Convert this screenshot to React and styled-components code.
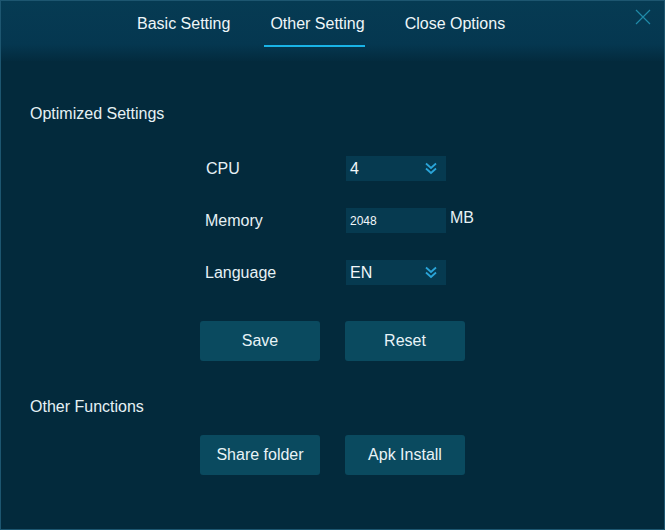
import React from "react";
import styled, { createGlobalStyle } from "styled-components";

const Global = createGlobalStyle`
  html, body { margin: 0; padding: 0; background: #032a3c; }
  body { font-family: "Liberation Sans", Arial, sans-serif; }
  * { box-sizing: border-box; }
`;

const Window = styled.div`
  width: 665px;
  height: 530px;
  background: #032a3c;
  border: 1px solid #1d5670;
  display: flex;
  flex-direction: column;
  position: relative;
  color: #e6f1f5;
`;

const Header = styled.div`
  height: 60px;
  background: linear-gradient(to bottom, #063b53 0%, #053750 72%, #032b3e 100%);
  display: flex;
  justify-content: flex-start;
  align-items: flex-start;
  padding-left: 113px;
`;

const Tabs = styled.div`
  display: flex;
`;

const Tab = styled.div`
  font-size: 16px;
  color: #eef6f9;
  padding: 14px 0 0 6px;
  height: 46px;
  margin: 0 17px;
  border-bottom: 2px solid ${(p) => (p.$active ? "#19b3e6" : "transparent")};
`;

const Close = styled.div`
  position: absolute;
  top: 8px;
  right: 13px;
  width: 16px;
  height: 16px;
`;

const Body = styled.div`
  padding: 44px 0 0 29px;
  display: flex;
  flex-direction: column;
`;

const SectionTitle = styled.div`
  font-size: 16px;
  color: #e6f1f5;
  height: 20px;
  margin-top: ${(p) => p.$mt || 0}px;
`;

const Form = styled.div`
  display: grid;
  grid-template-columns: 141px 100px auto;
  grid-auto-rows: 25px;
  row-gap: 27px;
  margin: 31px 0 0 175px;
  align-items: center;
`;

const Label = styled.div`
  font-size: 16px;
  color: #e6f1f5;
  padding-left: ${(p) => p.$pad || 0}px;
`;

const Field = styled.div`
  height: 25px;
  background: #063a50;
  display: flex;
  align-items: center;
  justify-content: space-between;
  padding: 0 9px 0 4px;
  font-size: ${(p) => (p.$small ? "12px" : "16px")};
  color: #f2f8fa;
`;

const Unit = styled.div`
  font-size: 16px;
  color: #e6f1f5;
  padding-left: 4px;
  margin-top: -5px;
`;

const ButtonRow = styled.div`
  display: flex;
  gap: 25px;
  margin: ${(p) => p.$m};
`;

const Button = styled.div`
  width: 120px;
  height: 40px;
  border-radius: 3px;
  background: #0a4a5f;
  display: flex;
  align-items: center;
  justify-content: center;
  font-size: 16px;
  color: #e8f3f7;
`;

const Chevron = () => (
  <svg width="12" height="13" viewBox="0 0 12 13">
    <path d="M1 1.5 L6 6 L11 1.5" fill="none" stroke="#2aa4d8" strokeWidth="1.8" />
    <path d="M1 6.5 L6 11 L11 6.5" fill="none" stroke="#2aa4d8" strokeWidth="1.8" />
  </svg>
);

export default function App() {
  return (
    <>
      <Global />
      <Window>
        <Header>
          <Tabs>
            <Tab>Basic Setting</Tab>
            <Tab $active>Other Setting</Tab>
            <Tab>Close Options</Tab>
          </Tabs>
        </Header>
        <Close>
          <svg width="16" height="16" viewBox="0 0 16 16">
            <path d="M1 1 L15 15 M15 1 L1 15" stroke="#1f8aa8" strokeWidth="1.2" />
          </svg>
        </Close>
        <Body>
          <SectionTitle>Optimized Settings</SectionTitle>
          <Form>
            <Label $pad={1}>CPU</Label>
            <Field>
              4
              <Chevron />
            </Field>
            <div />
            <Label>Memory</Label>
            <Field $small>2048</Field>
            <Unit>MB</Unit>
            <Label>Language</Label>
            <Field>
              EN
              <Chevron />
            </Field>
            <div />
          </Form>
          <ButtonRow $m="36px 0 0 170px">
            <Button>Save</Button>
            <Button>Reset</Button>
          </ButtonRow>
          <SectionTitle $mt={37}>Other Functions</SectionTitle>
          <ButtonRow $m="17px 0 0 170px">
            <Button>Share folder</Button>
            <Button>Apk Install</Button>
          </ButtonRow>
        </Body>
      </Window>
    </>
  );
}
